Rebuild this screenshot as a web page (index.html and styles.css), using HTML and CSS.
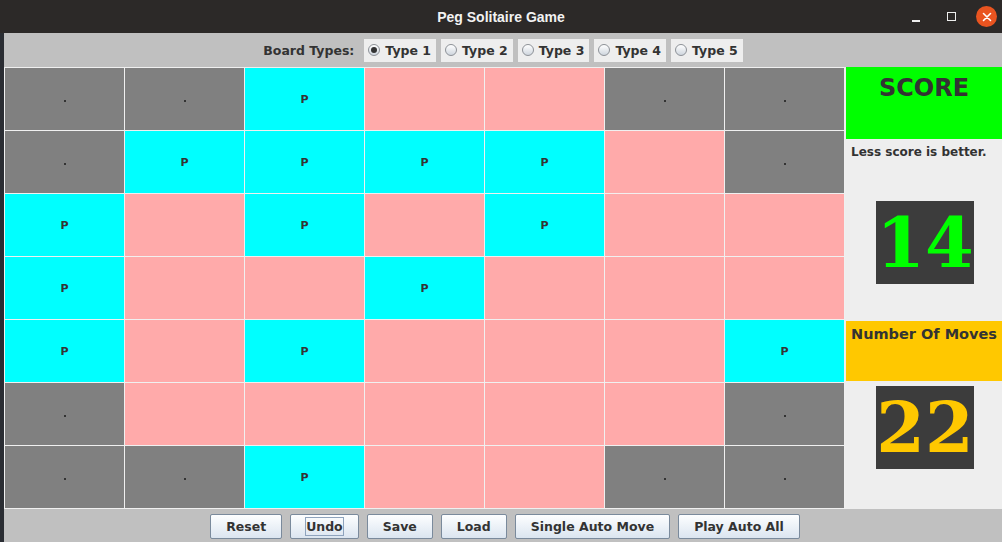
FILE: index.html
```html
<!DOCTYPE html>
<html>
<head>
<meta charset="utf-8">
<link rel="stylesheet" href="styles.css">
</head>
<body>
<div class="titlebar">
  <div class="title">Peg Solitaire Game</div>
  <div class="wctl">
    <span class="wmin"></span>
    <span class="wmax"></span>
    <span class="wclose"><svg width="10" height="10" viewBox="0 0 10 10"><path d="M1.5 1.5L8.5 8.5M8.5 1.5L1.5 8.5" stroke="#fff" stroke-width="1.6" stroke-linecap="round"/></svg></span>
  </div>
</div>
<div class="window">
  <div class="topbar">
    <span class="label">Board Types:</span>
    <span class="radio"><span class="circle on"></span>Type 1</span>
    <span class="radio"><span class="circle"></span>Type 2</span>
    <span class="radio"><span class="circle"></span>Type 3</span>
    <span class="radio"><span class="circle"></span>Type 4</span>
    <span class="radio"><span class="circle"></span>Type 5</span>
  </div>
  <div class="main">
    <div class="board">
      <div class="cell g"><i></i></div><div class="cell g"><i></i></div><div class="cell c">P</div><div class="cell k"></div><div class="cell k"></div><div class="cell g"><i></i></div><div class="cell g"><i></i></div>
      <div class="cell g"><i></i></div><div class="cell c">P</div><div class="cell c">P</div><div class="cell c">P</div><div class="cell c">P</div><div class="cell k"></div><div class="cell g"><i></i></div>
      <div class="cell c">P</div><div class="cell k"></div><div class="cell c">P</div><div class="cell k"></div><div class="cell c">P</div><div class="cell k"></div><div class="cell k"></div>
      <div class="cell c">P</div><div class="cell k"></div><div class="cell k"></div><div class="cell c">P</div><div class="cell k"></div><div class="cell k"></div><div class="cell k"></div>
      <div class="cell c">P</div><div class="cell k"></div><div class="cell c">P</div><div class="cell k"></div><div class="cell k"></div><div class="cell k"></div><div class="cell c">P</div>
      <div class="cell g"><i></i></div><div class="cell k"></div><div class="cell k"></div><div class="cell k"></div><div class="cell k"></div><div class="cell k"></div><div class="cell g"><i></i></div>
      <div class="cell g"><i></i></div><div class="cell g"><i></i></div><div class="cell c">P</div><div class="cell k"></div><div class="cell k"></div><div class="cell g"><i></i></div><div class="cell g"><i></i></div>
    </div>
    <div class="side">
      <div class="scorehead">SCORE</div>
      <div class="hint">Less score is better.</div>
      <div class="numbox score">14</div>
      <div class="moveshead">Number Of Moves</div>
      <div class="numbox moves">22</div>
    </div>
  </div>
  <div class="bottombar">
    <button class="btn">Reset</button>
    <button class="btn"><span class="focus">Undo</span></button>
    <button class="btn">Save</button>
    <button class="btn">Load</button>
    <button class="btn">Single Auto Move</button>
    <button class="btn">Play Auto All</button>
  </div>
</div>
</body>
</html>
```
FILE: styles.css
```css
* { box-sizing: border-box; }
html, body { margin: 0; padding: 0; }
body {
  width: 1002px;
  height: 542px;
  overflow: hidden;
  background: #2a2d33;
  font-family: "DejaVu Sans", sans-serif;
}
.titlebar {
  height: 33px;
  background: #2c2928;
  display: flex;
  align-items: center;
  justify-content: center;
  position: relative;
}
.title {
  color: #f2f2f2;
  font-family: "Liberation Sans", sans-serif;
  font-weight: bold;
  font-size: 14px;
}
.wctl {
  position: absolute;
  right: 5px;
  top: 6px;
  display: flex;
  align-items: center;
}
.wmin {
  width: 8px;
  height: 2px;
  background: #eee;
  margin-right: 27px;
  margin-top: 9px;
}
.wmax {
  width: 9px;
  height: 9px;
  border: 1.5px solid #eee;
  margin-right: 20px;
}
.wclose {
  width: 21px;
  height: 21px;
  border-radius: 50%;
  background: #e95420;
  display: flex;
  align-items: center;
  justify-content: center;
}
.window {
  margin-left: 4px;
  width: 998px;
  height: 509px;
  background: #c0c0c0;
  display: flex;
  flex-direction: column;
}
.topbar {
  height: 34px;
  display: flex;
  align-items: center;
  justify-content: center;
  gap: 5px;
  padding-left: 0;
  font-weight: bold;
  font-size: 12.5px;
  color: #333;
}
.label { margin-right: 5px; }
.radio {
  height: 23px;
  background: #eeeeee;
  display: flex;
  align-items: center;
  padding: 0 5px 0 4px;
  gap: 5px;
}
.circle {
  width: 12px;
  height: 12px;
  border-radius: 50%;
  border: 1px solid #8d9197;
  background: linear-gradient(#ffffff, #cfd6de);
  display: flex;
  align-items: center;
  justify-content: center;
}
.circle.on::after {
  content: "";
  width: 6px;
  height: 6px;
  border-radius: 50%;
  background: #333;
}
.main {
  display: flex;
  height: 442px;
}
.board {
  display: grid;
  grid-template-columns: repeat(7, 119px);
  grid-template-rows: repeat(7, 62px);
  gap: 1px;
  padding: 1px;
  background: #f0f0f0;
  width: 841px;
}
.cell {
  display: flex;
  align-items: center;
  justify-content: center;
  font-weight: bold;
  font-size: 11px;
  color: #333;
}
.cell i {
  width: 2px;
  height: 2px;
  background: #333;
  margin-top: 3px;
}
.g { background: #808080; }
.c { background: #00ffff; }
.k { background: #ffaaaa; }
.side {
  flex: 1;
  background: #eeeeee;
  padding-left: 1px;
  display: flex;
  flex-direction: column;
  color: #333;
}
.scorehead {
  height: 72px;
  background: #00ff00;
  font-weight: bold;
  font-size: 24px;
  text-align: center;
  padding-top: 7px;
}
.hint {
  font-weight: bold;
  font-size: 12px;
  padding-left: 5px;
  margin-top: 6px;
}
.numbox {
  width: 98px;
  height: 83px;
  background: #3c3c3c;
  margin-left: 30px;
  font-family: "DejaVu Serif", serif;
  font-weight: bold;
  display: flex;
  align-items: center;
  justify-content: center;
  line-height: 1;
}
.score {
  margin-top: 42px;
  color: #00ff00;
  font-size: 70px;
}
.moves {
  margin-top: 5px;
  color: #ffc800;
  font-size: 70px;
}
.moveshead {
  margin-top: 37px;
  height: 60px;
  background: #ffc800;
  font-weight: bold;
  font-size: 14.5px;
  padding: 5px 0 0 5px;
  white-space: nowrap;
}
.bottombar {
  height: 33px;
  display: flex;
  align-items: center;
  justify-content: center;
  gap: 8px;
  padding-left: 4px;
}
.btn {
  height: 25px;
  padding: 0 15px;
  border: 1px solid #7a8a9c;
  border-radius: 2px;
  background: linear-gradient(#fdfeff, #dbe5f0);
  font-family: "DejaVu Sans", sans-serif;
  font-weight: bold;
  font-size: 12.5px;
  color: #333;
  margin-top: 2px;
}
.focus {
  outline: 1px solid #8ea3bd;
  padding: 1px 0;
}
```
